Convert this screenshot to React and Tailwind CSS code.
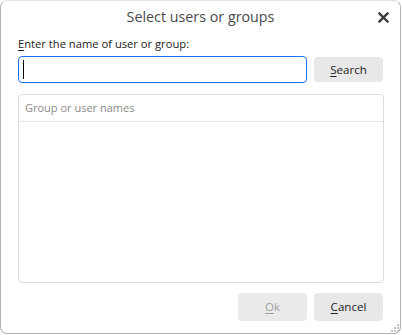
import React, { useState } from "react";

export default function App() {
  const [query, setQuery] = useState("");

  return (
    <div className="w-[402px] h-[335px] bg-white" style={{ fontFamily: '"Open Sans", "Noto Sans", sans-serif' }}>
      <div className="relative w-[401px] h-[334px] bg-white border border-[#b4b4b4] border-t-[#e2e2e2] rounded-[7px] flex flex-col px-[17px]">
        {/* Title bar */}
        <div className="h-[35px] flex items-center justify-center relative shrink-0">
          <h1 className="text-[14.3px] text-[#4a4a4a] leading-none -mt-[2px]">Select users or groups</h1>
          <button className="absolute right-[-8px] top-[8px] w-[16px] h-[16px] flex items-center justify-center">
            <svg width="11" height="11" viewBox="0 0 11 11">
              <path d="M1.5 1.5 L9.5 9.5 M9.5 1.5 L1.5 9.5" stroke="#3a3a3a" strokeWidth="2.4" strokeLinecap="square" />
            </svg>
          </button>
        </div>

        {/* Name input */}
        <label className="text-[11.2px] text-[#222] leading-[16px]">
          <span className="underline underline-offset-2">E</span>nter the name of user or group:
        </label>
        <div className="flex gap-[7px] mt-[4px]">
          <div className="relative">
            <input
              type="text"
              value={query}
              onChange={(e) => setQuery(e.target.value)}
              className="w-[289px] h-[27px] border border-[#1a73e8] rounded-[4px] px-[5px] outline-none text-[12px] caret-black"
            />
            {query === "" && (
              <span className="absolute left-[5px] top-[4px] w-[1px] h-[19px] bg-black pointer-events-none" />
            )}
          </div>
          <button className="w-[69px] h-[25px] mt-[1px] bg-[#e8e8e8] rounded-[4px] text-[11.6px] text-[#222]">
            <span className="underline underline-offset-2">S</span>earch
          </button>
        </div>

        {/* List */}
        <div className="mt-[11px] w-[366px] h-[189px] border border-[#dcdcdc] rounded-[4px] flex flex-col">
          <div className="h-[27px] border-b border-[#e4e4e4] flex items-center px-[6px] text-[11px] text-[#8a8a8a]">
            Group or user names
          </div>
          <div className="flex-1" />
        </div>

        {/* Footer buttons */}
        <div className="flex justify-end gap-[7px] mt-[10px]">
          <button disabled className="w-[69px] h-[28px] bg-[#ebebeb] rounded-[4px] text-[11.6px] text-[#a0a0a0]">
            <span className="underline underline-offset-2">O</span>k
          </button>
          <button className="w-[69px] h-[28px] bg-[#e8e8e8] rounded-[4px] text-[11.6px] text-[#222]">
            <span className="underline underline-offset-2">C</span>ancel
          </button>
        </div>

        {/* Resize grip */}
        <svg className="absolute right-[1px] bottom-[1px]" width="8" height="8" viewBox="0 0 8 8">
          <rect x="6" y="0" width="2" height="2" fill="#c4c4c4" />
          <rect x="3" y="3" width="2" height="2" fill="#c4c4c4" />
          <rect x="6" y="3" width="2" height="2" fill="#c4c4c4" />
          <rect x="0" y="6" width="2" height="2" fill="#c4c4c4" />
          <rect x="3" y="6" width="2" height="2" fill="#c4c4c4" />
          <rect x="6" y="6" width="2" height="2" fill="#c4c4c4" />
        </svg>
      </div>
    </div>
  );
}
